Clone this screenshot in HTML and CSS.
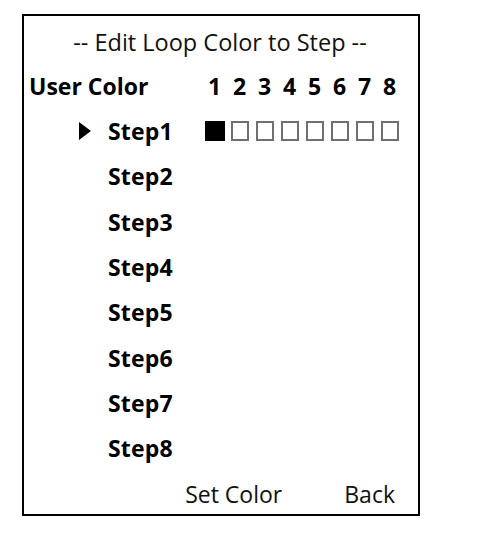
FILE: index.html
```html
<!DOCTYPE html>
<html>
<head>
<meta charset="utf-8">
<link rel="stylesheet" href="styles.css">
</head>
<body>
<div class="frame">
  <div class="title">-- Edit Loop Color to Step --</div>
  <div class="header">
    <div class="head-label">User Color</div>
    <div class="cells">
      <span class="cell num">1</span><span class="cell num">2</span><span class="cell num">3</span><span class="cell num">4</span><span class="cell num">5</span><span class="cell num">6</span><span class="cell num">7</span><span class="cell num">8</span>
    </div>
  </div>
  <div class="row">
    <div class="marker"><svg class="tri" width="12" height="18" viewBox="0 0 12 18"><polygon points="0,0 12,9 0,18" fill="#000"/></svg></div>
    <div class="step">Step1</div>
    <div class="cells">
      <span class="cell"><span class="box filled"></span></span>
      <span class="cell"><span class="box"></span></span>
      <span class="cell"><span class="box"></span></span>
      <span class="cell"><span class="box"></span></span>
      <span class="cell"><span class="box"></span></span>
      <span class="cell"><span class="box"></span></span>
      <span class="cell"><span class="box"></span></span>
      <span class="cell"><span class="box"></span></span>
    </div>
  </div>
  <div class="row"><div class="marker"></div><div class="step">Step2</div></div>
  <div class="row"><div class="marker"></div><div class="step">Step3</div></div>
  <div class="row"><div class="marker"></div><div class="step">Step4</div></div>
  <div class="row"><div class="marker"></div><div class="step">Step5</div></div>
  <div class="row"><div class="marker"></div><div class="step">Step6</div></div>
  <div class="row"><div class="marker"></div><div class="step">Step7</div></div>
  <div class="row"><div class="marker"></div><div class="step">Step8</div></div>
  <div class="footer">
    <span class="btn">Set Color</span>
    <span class="btn">Back</span>
  </div>
</div>
</body>
</html>
```
FILE: styles.css
```css
html, body {
  margin: 0;
  padding: 0;
  background: #fff;
}
body {
  font-family: "Open Sans", "Liberation Sans", sans-serif;
  color: #000;
}
.frame {
  margin: 14px 0 0 22px;
  width: 394px;
  height: 493px;
  border: 2px solid #000;
  padding-top: 5px;
  box-sizing: content-box;
  overflow: hidden;
}
.frame > * {
  box-sizing: border-box;
}
.title {
  height: 43px;
  line-height: 42px;
  font-size: 23.5px;
  text-align: center;
  color: #111;
  padding-right: 2px;
}
.header {
  display: flex;
  height: 45px;
  line-height: 45px;
  font-size: 23px;
  font-weight: 700;
}
.head-label {
  width: 178px;
  padding-left: 5px;
  box-sizing: border-box;
}
.cells {
  display: flex;
  align-items: center;
}
.cell {
  width: 25px;
  display: flex;
  justify-content: center;
  align-items: center;
}
.num {
  font-size: 23px;
}
.row {
  display: flex;
  align-items: center;
  height: 45.3px;
  line-height: 45px;
  font-size: 23px;
  font-weight: 700;
}
.marker {
  width: 84px;
  height: 45px;
  display: flex;
  align-items: center;
  padding-left: 55px;
  box-sizing: border-box;
}
.tri {
  display: block;
  margin-top: -1px;
}
.step {
  width: 94px;
  letter-spacing: 0.2px;
}
.box {
  display: block;
  width: 18px;
  height: 20px;
  border: 2px solid #707070;
  box-sizing: border-box;
  margin-top: -2px;
}
.box.filled {
  width: 20px;
  background: #000;
  border-color: #000;
}
.footer {
  display: flex;
  justify-content: flex-end;
  gap: 62px;
  height: 42px;
  line-height: 46px;
  font-size: 23px;
  padding-right: 23px;
  color: #111;
}
```
